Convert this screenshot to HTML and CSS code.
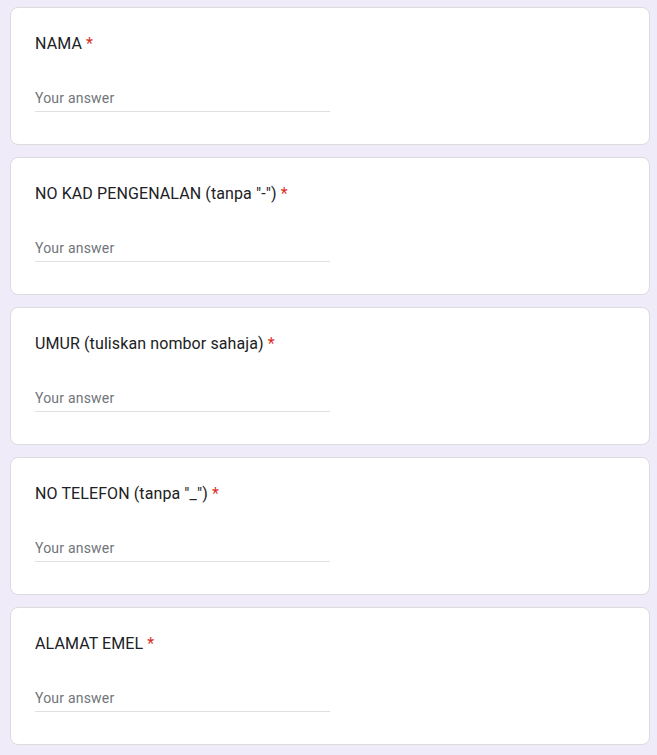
FILE: index.html
```html
<!DOCTYPE html>
<html lang="ms">
<head>
    <meta charset="UTF-8">
    <meta name="viewport" content="width=device-width, initial-scale=1.0">
    <title>Borang</title>
    <link rel="stylesheet" href="styles.css">
</head>
<body>
    <div class="form">
        <div class="card">
            <div class="title">NAMA <span class="req">*</span></div>
            <div class="answer"><input type="text" placeholder="Your answer"></div>
        </div>
        <div class="card">
            <div class="title">NO KAD PENGENALAN (tanpa "-") <span class="req">*</span></div>
            <div class="answer"><input type="text" placeholder="Your answer"></div>
        </div>
        <div class="card">
            <div class="title">UMUR (tuliskan nombor sahaja) <span class="req">*</span></div>
            <div class="answer"><input type="text" placeholder="Your answer"></div>
        </div>
        <div class="card">
            <div class="title">NO TELEFON (tanpa "_") <span class="req">*</span></div>
            <div class="answer"><input type="text" placeholder="Your answer"></div>
        </div>
        <div class="card">
            <div class="title">ALAMAT EMEL <span class="req">*</span></div>
            <div class="answer"><input type="text" placeholder="Your answer"></div>
        </div>
    </div>
</body>
</html>
```

FILE: styles.css
```css
body { margin: 0; background-color: #f0ebf8; font-family: Roboto, Arial, sans-serif; color: #202124; }
.form { display: flex; flex-direction: column; gap: 12px; width: 640px; margin: 7px 0 0 10px; }

/* CARTES */
.card {
    background-color: #fff;
    border: 1px solid #dadce0;
    border-radius: 8px;
    padding: 24px 24px 32px;
}
.title { font-size: 16px; line-height: 24px; letter-spacing: 0.1px; }
.req { color: #d93025; }

/* CHAMP */
.answer { margin-top: 32px; width: 295px; }
.answer input {
    display: block;
    width: 100%;
    box-sizing: border-box;
    border: none;
    border-bottom: 1px solid #e0e0e0;
    padding: 0 0 3px;
    margin: 0;
    font-family: Roboto, Arial, sans-serif;
    font-size: 14px;
    line-height: 20px;
    height: 24px;
    color: #202124;
    outline: none;
    background: transparent;
}
.answer input::placeholder { color: #70757a; letter-spacing: 0.2px; }
```
